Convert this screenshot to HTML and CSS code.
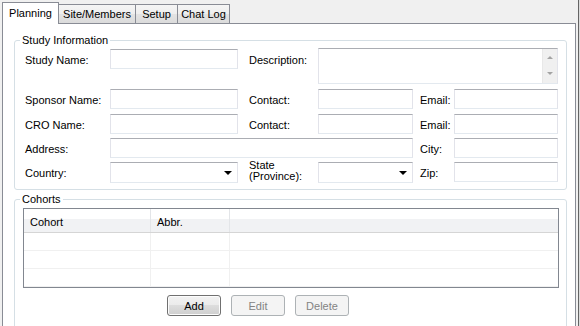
FILE: index.html
```html
<!DOCTYPE html>
<html lang="en">
<head>
    <meta charset="UTF-8">
    <title>Planning</title>
    <link rel="stylesheet" href="styles.css">
</head>
<body>
    <div class="window">
        <div class="main">
            <div class="tabs">
                <div class="tab active">Planning</div>
                <div class="tab site">Site/Members</div>
                <div class="tab setup">Setup</div>
                <div class="tab chat">Chat Log</div>
            </div>
            <div class="page">
                <fieldset class="group study">
                    <legend>Study Information</legend>
                    <div class="form">
                        <div class="lbl top">Study Name:</div>
                        <div class="field top"></div>
                        <div class="lbl top gap1">Description:</div>
                        <div class="field memo">
                            <div class="scroll">
                                <span class="up"></span>
                                <span class="down"></span>
                            </div>
                        </div>

                        <div class="lbl">Sponsor Name:</div>
                        <div class="field"></div>
                        <div class="lbl gap1">Contact:</div>
                        <div class="field"></div>
                        <div class="lbl gap2">Email:</div>
                        <div class="field"></div>

                        <div class="lbl">CRO Name:</div>
                        <div class="field"></div>
                        <div class="lbl gap1">Contact:</div>
                        <div class="field"></div>
                        <div class="lbl gap2">Email:</div>
                        <div class="field"></div>

                        <div class="lbl">Address:</div>
                        <div class="field address"></div>
                        <div class="lbl gap2">City:</div>
                        <div class="field"></div>

                        <div class="lbl">Country:</div>
                        <div class="field combo"><span class="arrow"></span></div>
                        <div class="lbl gap1 two">State<br>(Province):</div>
                        <div class="field combo"><span class="arrow"></span></div>
                        <div class="lbl gap2">Zip:</div>
                        <div class="field"></div>
                    </div>
                </fieldset>

                <fieldset class="group cohorts">
                    <legend>Cohorts</legend>
                    <div class="list">
                        <div class="head">
                            <div class="col">Cohort</div>
                            <div class="col">Abbr.</div>
                            <div class="col last"></div>
                        </div>
                        <div class="row"><div class="col"></div><div class="col"></div><div class="col last"></div></div>
                        <div class="row"><div class="col"></div><div class="col"></div><div class="col last"></div></div>
                        <div class="row"><div class="col"></div><div class="col"></div><div class="col last"></div></div>
                    </div>
                    <div class="buttons">
                        <button class="btn default">Add</button>
                        <button class="btn" disabled>Edit</button>
                        <button class="btn" disabled>Delete</button>
                    </div>
                </fieldset>
            </div>
        </div>
        <div class="splitter"></div>
    </div>
</body>
</html>
```

FILE: styles.css
```css
*{
    margin: 0;
    padding: 0;
    box-sizing: border-box;
}
html, body{
    height: 326px;
    overflow: hidden;
}
body{
    background-color: #f0f0f0;
    font-family: "Liberation Sans", Arial, sans-serif;
    font-size: 11px;
    color: #000;
}
.window{
    display: flex;
    height: 326px;
}
.main{
    width: 578px;
}
.splitter{
    width: 2px;
    border-left: 1px solid #646464;
    background-color: #dcdcdc;
}

/* tabs */
.tabs{
    display: flex;
    align-items: flex-end;
    height: 23px;
    padding-left: 2px;
}
.tab{
    height: 19px;
    border: 1px solid #898c95;
    border-bottom: none;
    background: linear-gradient(#f5f5f5, #eeeeee 50%, #e3e3e3 50%, #dbdbdb);
    text-align: center;
    padding-top: 1px;
    line-height: 17px;
    white-space: nowrap;
}
.tab.active{
    position: relative;
    z-index: 1;
    width: 57px;
    height: 22px;
    margin-bottom: -1px;
    padding-top: 0;
    line-height: 20px;
    background: #fff;
}
.tab.site{
    width: 77px;
    border-left: none;
    margin-left: 0;
}
.tab.setup{
    width: 43px;
    margin-left: -1px;
}
.tab.chat{
    width: 53px;
    margin-left: -1px;
}

/* tab page */
.page{
    margin-left: 2px;
    width: 574px;
    height: 310px;
    border: 1px solid #898c95;
    background-color: #fff;
    padding-left: 11px;
}
.group{
    width: 553px;
    border: 1px solid #d5dfe5;
    border-radius: 3px;
}
.group legend{
    margin-left: 5px;
    padding: 0 2px;
    line-height: 13px;
}
.study{
    margin-top: 10px;
}
.cohorts{
    margin-top: 3px;
    padding-bottom: 20px;
}

/* study form */
.form{
    display: grid;
    grid-template-columns: 85px 128px 80px 95px 41px 104px;
    grid-template-rows: 41px 25px 24px 24px 20px;
    padding: 1px 0 7px 10px;
}
.lbl{
    line-height: 20px;
    padding-top: 1px;
    white-space: nowrap;
}
.lbl.gap1{
    padding-left: 11px;
}
.lbl.gap2{
    padding-left: 7px;
}
.lbl.two{
    line-height: 11px;
    padding-top: 0;
    margin-top: -2px;
}
.top{
    margin-top: 1px;
}
.field{
    height: 20px;
    border: 1px solid;
    border-color: #abadb3 #e2e3ea #e3e9ef #e2e3ea;
    background-color: #fff;
}
.field.memo{
    grid-column: 4 / span 3;
    height: 36px;
    display: flex;
    justify-content: flex-end;
}
.field.address{
    grid-column: 2 / span 3;
}
.scroll{
    width: 15px;
    background-color: #f0f0f0;
    border-left: 1px solid #e8e8e8;
    display: flex;
    flex-direction: column;
    align-items: center;
    justify-content: space-between;
    padding: 7px 0 8px;
}
.scroll .up, .scroll .down{
    width: 0;
    height: 0;
    border-left: 3px solid transparent;
    border-right: 3px solid transparent;
}
.scroll .up{
    border-bottom: 3px solid #a3a3a3;
}
.scroll .down{
    border-top: 3px solid #a3a3a3;
}
.field.combo{
    height: 21px;
    display: flex;
    justify-content: flex-end;
    align-items: center;
    padding-right: 5px;
}
.arrow{
    width: 0;
    height: 0;
    border-left: 4px solid transparent;
    border-right: 4px solid transparent;
    border-top: 4px solid #000;
}

/* cohorts list */
.list{
    margin: 2px 0 0 8px;
    width: 536px;
    height: 80px;
    border: 1px solid #828790;
    overflow: hidden;
}
.head, .row{
    display: grid;
    grid-template-columns: 127px 79px 1fr;
}
.head{
    height: 24px;
    border-bottom: 1px solid #d5d5d5;
    background: linear-gradient(#fff 0, #fff 45%, #f1f2f4 45%, #f1f2f4);
}
.head .col{
    line-height: 20px;
    padding: 3px 0 0 6px;
    border-right: 1px solid #e3e5e8;
}
.row{
    height: 18px;
    border-bottom: 1px solid #f0f0f0;
}
.row .col{
    border-right: 1px solid #f0f0f0;
}
.col.last{
    border-right: none;
}

/* buttons */
.buttons{
    display: flex;
    gap: 10px;
    margin-top: 7px;
    padding-left: 152px;
}
.btn{
    width: 54px;
    height: 21px;
    font: inherit;
    border: 1px solid #adb2b5;
    border-radius: 3px;
    background-color: #f4f4f4;
    color: #838383;
}
.btn.default{
    border-color: #707070;
    color: #000;
    background: linear-gradient(#f2f2f2, #ebebeb 50%, #dddddd 50%, #cfcfcf);
    box-shadow: inset 0 0 0 1px #fcfcfc;
}
```
